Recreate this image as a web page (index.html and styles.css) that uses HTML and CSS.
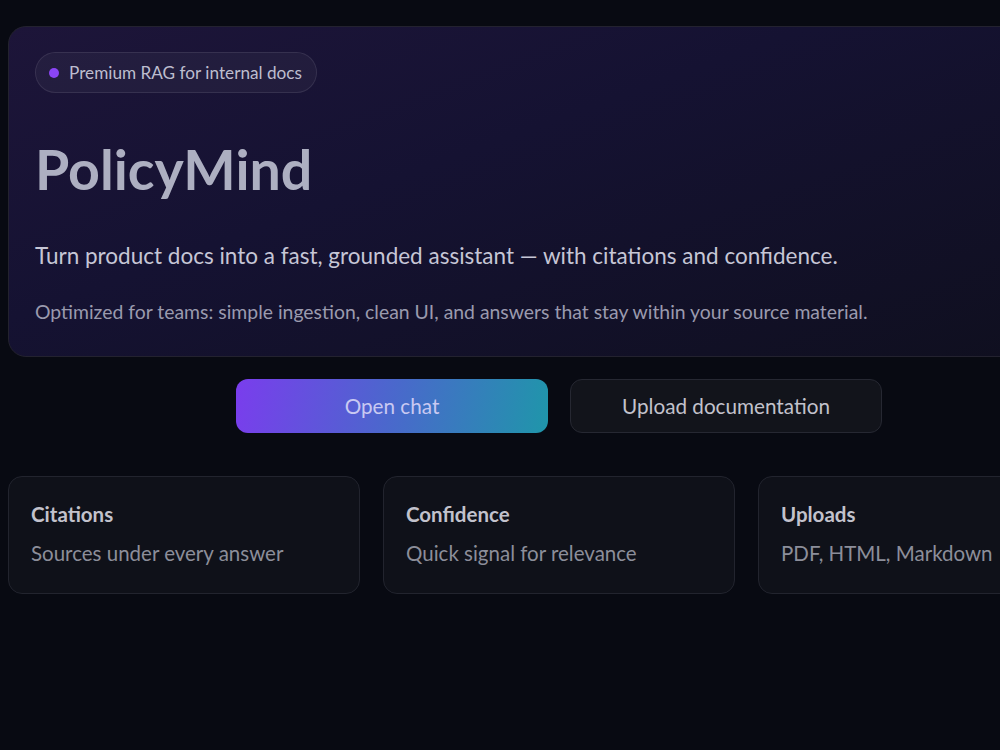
FILE: index.html
```html
<!DOCTYPE html>
<html lang="en">
<head>
  <meta charset="UTF-8">
  <meta name="viewport" content="width=device-width, initial-scale=1.0">
  <title>PolicyMind</title>
  <link rel="stylesheet" href="styles.css">
</head>
<body>
  <div class="page">
    <section class="hero">
      <div class="pill"><span class="dot"></span>Premium RAG for internal docs</div>
      <h1>PolicyMind</h1>
      <p class="tagline">Turn product docs into a fast, grounded assistant — with citations and confidence.</p>
      <p class="note">Optimized for teams: simple ingestion, clean UI, and answers that stay within your source material.</p>
    </section>

    <div class="actions">
      <button class="btn btn-primary">Open chat</button>
      <button class="btn btn-secondary">Upload documentation</button>
    </div>

    <div class="features">
      <div class="feature">
        <h3>Citations</h3>
        <p>Sources under every answer</p>
      </div>
      <div class="feature">
        <h3>Confidence</h3>
        <p>Quick signal for relevance</p>
      </div>
      <div class="feature">
        <h3>Uploads</h3>
        <p>PDF, HTML, Markdown</p>
      </div>
    </div>
  </div>
</body>
</html>
```

FILE: styles.css
```css
html, body {
  margin: 0;
  padding: 0;
  background-color: #080a12;
  overflow: hidden;
}
body {
  font-family: Lato, "Noto Sans", sans-serif;
  color: #c4c4d2;
}
.page {
  width: 1102px;
  padding: 26px 0 0 8px;
}
.hero {
  box-sizing: border-box;
  height: 331px;
  padding: 25px 26px;
  border: 1px solid #23222f;
  border-radius: 18px;
  background: linear-gradient(160deg, #1d1539 0%, #151232 40%, #0f0f1e 100%);
}
.pill {
  display: inline-flex;
  align-items: center;
  gap: 10px;
  height: 39px;
  padding: 0 14px 0 13px;
  border: 1px solid rgba(255, 255, 255, 0.09);
  border-radius: 22px;
  background-color: rgba(255, 255, 255, 0.04);
  font-size: 17.2px;
  color: #bdbdcf;
}
.dot {
  width: 10px;
  height: 10px;
  border-radius: 50%;
  background-color: #8b45f5;
}
h1 {
  margin: 43px 0 0;
  font-size: 55.5px;
  line-height: 1.2;
  font-weight: 700;
  color: #adafc1;
}
.tagline {
  margin: 39px 0 0;
  font-size: 22.5px;
  color: #c6c6d6;
}
.note {
  margin: 31px 0 0;
  font-size: 19.4px;
  color: #9a9aae;
}
.actions {
  display: flex;
  justify-content: center;
  gap: 22px;
  margin-top: 22px;
}
.btn {
  width: 312px;
  height: 54px;
  border-radius: 12px;
  font-family: inherit;
  font-size: 20.7px;
  cursor: pointer;
}
.btn-primary {
  border: none;
  background: linear-gradient(100deg, #7a3ded 0%, #4a68cc 50%, #1f96aa 100%);
  color: #c9c9f2;
}
.btn-secondary {
  border: 1px solid #262832;
  background-color: #12141b;
  color: #c2c2cc;
}
.features {
  display: grid;
  grid-template-columns: repeat(3, 1fr);
  gap: 23px;
  margin-top: 43px;
}
.feature {
  height: 118px;
  box-sizing: border-box;
  padding: 25px 22px;
  border: 1px solid #22242e;
  border-radius: 14px;
  background-color: #0f1119;
}
.feature h3 {
  margin: 0;
  font-size: 20.5px;
  font-weight: 700;
  color: #c2c2cc;
}
.feature p {
  margin: 15px 0 0;
  font-size: 20.5px;
  color: #8c8e9a;
}
```
